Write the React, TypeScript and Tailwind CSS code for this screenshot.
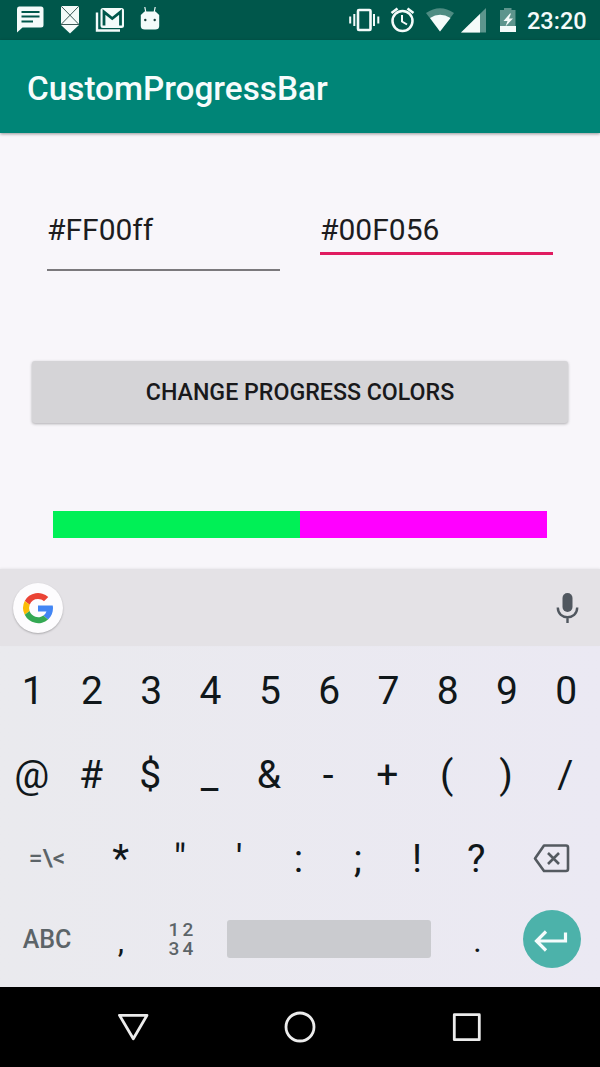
import React from "react";

const DIGITS = ["1", "2", "3", "4", "5", "6", "7", "8", "9", "0"];
const SYMBOLS = ["@", "#", "$", "_", "&", "-", "+", "(", ")", "/"];
const PUNCTUATION = ["*", '"', "'", ":", ";", "!", "?"];

function Key({ label }: { label: string }) {
  return <span className="flex-1 text-center">{label}</span>;
}

function StatusBar() {
  return (
    <header className="flex h-10 shrink-0 items-center bg-[#00574b] text-[#f4fbfa]">
      <svg className="ml-[14px]" width="32" height="40" viewBox="14 0 32 40" fill="currentColor">
        <path d="M19 6.500h22q2.500 0 2.500 2.500v16q0 2.500-2.500 2.500H22.500l-5.500 5V9q0-2.500 2-2.500z" />
        <path d="M21.500 12h18M21.500 16.500h18M21.500 21.500h11.500" stroke="#00574b" strokeWidth="2" />
      </svg>
      <svg className="ml-[10px]" width="28" height="40" viewBox="56 0 28 40" fill="currentColor">
        <path d="M62.500 6h15q1.500 0 1.500 1.500v17.500l-9 8.500-9-8.500V7.500q0-1.500 1.500-1.500z" />
        <path d="M61.500 6.500l17 17.500M78.500 6.500l-17 17.500M61 24.500h18" stroke="#3b5a57" strokeWidth="1" />
      </svg>
      <svg className="ml-2" width="36" height="40" viewBox="92 0 36 40" fill="none">
        <path d="M97 12.500v18h23" stroke="currentColor" strokeWidth="2.400" />
        <rect x="100.500" y="8" width="23.500" height="20" rx="2.500" fill="currentColor" />
        <path d="M104 25.500V12l8.250 6.500L120.500 12v13.500" stroke="#00574b" strokeWidth="2.800" />
      </svg>
      <svg className="ml-2" width="28" height="40" viewBox="136 0 28 40" fill="currentColor">
        <path d="M144.800 7l1.200 6M155.200 7l-1.200 6" stroke="currentColor" strokeWidth="1.200" />
        <path d="M144.500 11.500h11l3.700 3.500V26q0 3.500-4 3.500h-10.400q-4 0-4-3.500V15z" />
        <circle cx="145.300" cy="20" r="1.200" fill="#173f3a" />
        <circle cx="154.700" cy="20" r="1.200" fill="#173f3a" />
      </svg>
      <div className="flex-1" />
      <svg width="36" height="40" viewBox="346 0 36 40" fill="none" stroke="currentColor">
        <rect x="358" y="10" width="12.500" height="20" rx="1" strokeWidth="2.600" />
        <path d="M354.300 14v12M374 14v12" strokeWidth="2" />
        <path d="M350.200 16.500v7M378.300 16.500v7" strokeWidth="2" />
      </svg>
      <svg className="ml-[6px]" width="30" height="40" viewBox="388 0 30 40" fill="none" stroke="currentColor">
        <circle cx="402.500" cy="21" r="10" strokeWidth="2.500" />
        <path d="M402 15v6.500l5 3" strokeWidth="2" />
        <path d="M391.500 13l6-4.500M413.500 13l-6-4.500" strokeWidth="2.600" />
      </svg>
      <svg className="ml-[6px]" width="32" height="40" viewBox="424 0 32 40" fill="currentColor">
        <path d="M426 13q14-9.500 28 0L440 31.500z" opacity="0.32" />
        <path d="M430 18q10-6.500 20.500 0L440 31.500z" />
      </svg>
      <svg className="ml-[2px]" width="30" height="40" viewBox="458 0 30 40" fill="currentColor">
        <path d="M486 8v24.500h-25z" opacity="0.38" />
        <path d="M480 14v18.500h-19z" />
      </svg>
      <svg className="ml-2" width="24" height="40" viewBox="496 0 24 40" fill="currentColor">
        <path d="M504 8h7.500v2h4v16H500V10h4z" opacity="0.38" />
        <path d="M500 26h16v6h-16z" />
        <path d="M510 13.500l-6.500 7.500h4l-2 5.500 7.500-8h-4l2-5z" />
      </svg>
      <span className="ml-[7px] mr-[13px] mt-[3px] w-[60px] whitespace-nowrap text-[23.500px] leading-none font-medium">23:20</span>
    </header>
  );
}

function GoogleBadge() {
  return (
    <div className="mt-px flex size-[50px] items-center justify-center rounded-full bg-[#fdfcfe] shadow-[0_1px_2px_rgba(0,0,0,0.25)]">
      <svg width="36" height="36" viewBox="0 0 48 48">
        <path fill="#4285f4" d="M43.600 20.500H24v8h11.300a12 12 0 0 1-4.100 5.600l6.200 5.200C42 35.100 44 29.800 44 24c0-1.300-.1-2.400-.4-3.500z" />
        <path fill="#ea4335" d="M6.300 14.700l6.600 4.800A12 12 0 0 1 24 12c3.100 0 5.800 1.200 8 3l5.700-5.600A20 20 0 0 0 6.300 14.700z" />
        <path fill="#fbbc05" d="M6.300 14.700A20 20 0 0 0 6.300 33l6.500-5a12 12 0 0 1 .1-8.500z" />
        <path fill="#34a853" d="M6.300 33A20 20 0 0 0 37.400 39.300l-6.200-5.200A12 12 0 0 1 12.800 28z" />
      </svg>
    </div>
  );
}

function Keyboard() {
  return (
    <section className="flex h-[418px] shrink-0 flex-col bg-linear-to-r from-[#eaeaee] to-[#ebe9f3] text-[#10171a]">
      <div className="flex h-[77px] items-center justify-between bg-[#e4e2e6] pr-[18px] pl-[13px] shadow-[0_-1px_2px_rgba(0,0,0,0.06)]">
        <GoogleBadge />
        <svg width="30" height="36" viewBox="552 590 30 36" fill="none" stroke="#50575f">
          <rect x="562.500" y="593" width="10" height="19" rx="5" fill="#50575f" stroke="none" />
          <path d="M557.800 607.500c0 13 19.400 13 19.400 0M567.500 617v6" strokeWidth="2.400" />
        </svg>
      </div>
      <div className="mt-[3px] flex h-[84px] items-center pr-1 pl-[3px] text-[39px] leading-none">
        {DIGITS.map((label) => <Key key={label} label={label} />)}
      </div>
      <div className="flex h-[84px] items-center pr-[5px] pl-[2px] text-[39px] leading-none">
        {SYMBOLS.map((label) => <Key key={label} label={label} />)}
      </div>
      <div className="flex h-[83px] items-center px-[3px] text-[39px] leading-none">
        <span className="w-[88px] text-center text-[24.500px] font-medium text-[#5c6468]">=\&lt;</span>
        <div className="flex flex-1 pt-px">
          {PUNCTUATION.map((label) => <Key key={label} label={label} />)}
        </div>
        <div className="flex w-[91px] justify-center">
          <svg width="40" height="34" viewBox="532 842 40 34" fill="none" stroke="#545a60" strokeWidth="2.600" strokeLinejoin="round">
            <path d="M544 845.500h22q2 0 2 2v21.500q0 2-2 2h-22L535 858.500z" />
            <path d="M548 853l11 11M559 853l-11 11" />
          </svg>
        </div>
      </div>
      <div className="flex h-[77px] items-center px-[3px] text-[32px] leading-none">
        <span className="w-[88px] pt-[2px] text-center text-[25px] font-medium text-[#5c6468]">ABC</span>
        <span className="w-[59px] pt-1 pl-px text-center">,</span>
        <div className="grid w-[62px] grid-cols-[14px_14px] justify-center pt-px text-center text-[19px] leading-[19px] font-medium text-[#5c6468]">
          <span>1</span><span>2</span><span>3</span><span>4</span>
        </div>
        <div className="ml-[15px] h-[38px] w-[204px] rounded-[3px] bg-[#cacbcf]" />
        <span className="ml-[17px] w-[58px] pt-1 pl-px text-center">.</span>
        <div className="flex w-[91px] justify-center">
          <div className="flex size-[58px] items-center justify-center rounded-full bg-[#4cb2aa]">
            <svg width="58" height="58" viewBox="523 909 58 58" fill="none" stroke="#f5fcfc" strokeWidth="3.200">
              <path d="M565.500 931.500v8.500H537M546 930.500l-9.500 9.500 9.500 9.500" />
            </svg>
          </div>
        </div>
      </div>
    </section>
  );
}

function NavigationBar() {
  return (
    <nav className="flex h-20 shrink-0 items-center justify-center gap-[127px] bg-black">
      <svg width="40" height="40" viewBox="113 1007 40 40" fill="none" stroke="#ececec" strokeWidth="2.800" strokeLinejoin="round">
        <path d="M119.500 1015.300h27.500l-13.700 23.400z" />
      </svg>
      <svg width="40" height="40" viewBox="280 1007 40 40" fill="none" stroke="#ececec" strokeWidth="2.800">
        <circle cx="300" cy="1027" r="14" />
      </svg>
      <svg width="40" height="40" viewBox="447 1007 40 40" fill="none" stroke="#ececec" strokeWidth="2.800" strokeLinejoin="round">
        <rect x="454.300" y="1014.700" width="25" height="25" />
      </svg>
    </nav>
  );
}

export default function App() {
  return (
    <div className="flex h-[1067px] w-[600px] flex-col overflow-hidden bg-[#f8f6fa] font-[Roboto,sans-serif]">
      <StatusBar />
      <div className="flex h-[93px] shrink-0 items-center bg-[#008577] pt-1 pl-[27px] text-[33.300px] leading-none font-medium text-[#f7fcfc] shadow-[0_1px_3px_rgba(0,0,0,0.4)]">
        CustomProgressBar
      </div>
      <main className="flex flex-1 flex-col text-[#1d1d1f]">
        <div className="flex items-start gap-10 pt-[77px] pl-[47px] text-[30px] leading-[40px]">
          <div className="h-[61px] w-[233px] border-b-2 border-[#7b797c]">#FF00ff</div>
          <div className="h-[45px] w-[233px] border-b-[3px] border-[#e01b60]">#00F056</div>
        </div>
        <button className="mx-8 mt-[90px] h-[62px] rounded-[3px] bg-[#d5d4d7] pt-[2px] text-[23.200px] leading-none font-medium text-[#19191b] shadow-[0_1px_3px_rgba(0,0,0,0.3)]">
          CHANGE PROGRESS COLORS
        </button>
        <div className="mx-[53px] mt-[88px] flex h-[27px]">
          <div className="flex-1 bg-[#00f056]" />
          <div className="flex-1 bg-[#ff00ff]" />
        </div>
      </main>
      <Keyboard />
      <NavigationBar />
    </div>
  );
}
